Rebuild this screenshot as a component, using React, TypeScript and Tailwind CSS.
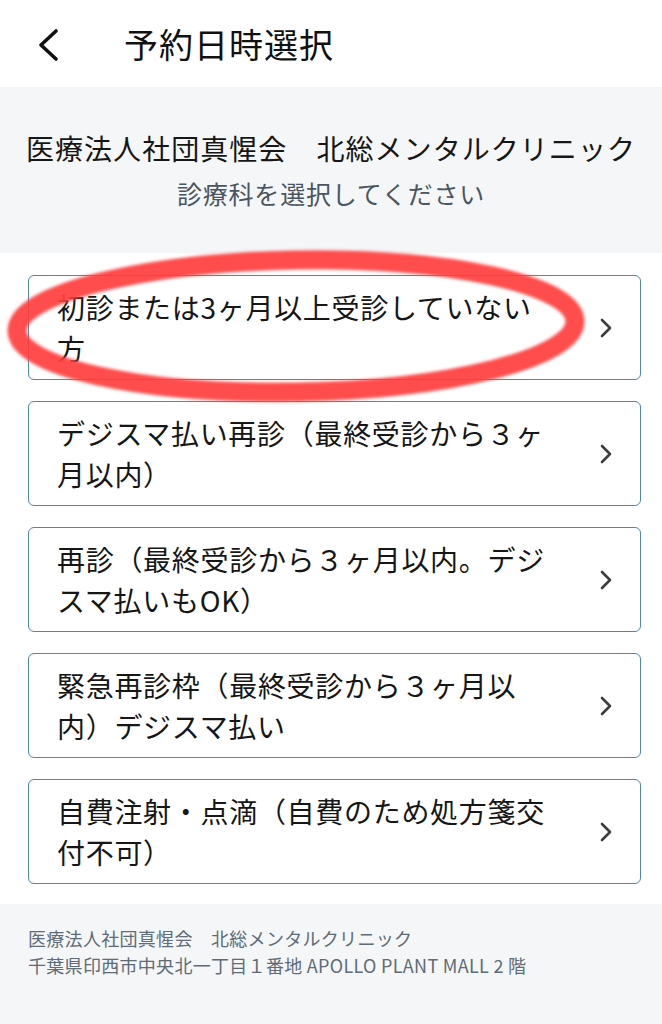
import React from "react";

const items = [
  "初診または3ヶ月以上受診していない方",
  "デジスマ払い再診（最終受診から３ヶ月以内）",
  "再診（最終受診から３ヶ月以内。デジスマ払いもOK）",
  "緊急再診枠（最終受診から３ヶ月以内）デジスマ払い",
  "自費注射・点滴（自費のため処方箋交付不可）",
];

const font = { fontFamily: '"Noto Sans CJK JP", "Noto Sans", sans-serif' };

export default function App() {
  return (
    <div className="relative w-[662px] min-h-[1024px] bg-[#f4f6f8] text-[#1a1a1a]" style={font}>
      <header className="h-[87px] bg-white flex items-center">
        <svg width="24" height="34" viewBox="0 0 24 34" className="ml-[36px] mt-[2px]">
          <path d="M20 3 L5 17 L20 31" fill="none" stroke="#111" strokeWidth="3.6" strokeLinecap="round" strokeLinejoin="round" />
        </svg>
        <h1 className="ml-[64px] text-[34px] leading-none tracking-[1px] text-[#111] font-normal">予約日時選択</h1>
      </header>

      <section className="h-[166px] bg-[#f4f6f8] flex flex-col items-center pt-[41px]">
        <div className="text-[28px] leading-[40px] tracking-[1.05px] text-[#161616] whitespace-nowrap">医療法人社団真惺会　北総メンタルクリニック</div>
        <div className="mt-[8px] text-[25px] leading-[34px] tracking-[0.8px] text-[#4b5560]">診療科を選択してください</div>
      </section>

      <section className="bg-white pt-[22px] pb-[20px] pl-[28px] pr-[21px] flex flex-col gap-[21px]">
        {items.map((t) => (
          <div key={t} className="h-[105px] border-[1.5px] border-[#4b88b6] rounded-[6px] flex items-center pl-[28px] pr-[28px]">
            <div className="w-[500px] text-[28px] leading-[41px] tracking-[0.7px] text-[#161616]" style={{ lineBreak: "strict" }}>{t}</div>
            <div className="flex-1 flex justify-end">
              <svg width="12" height="20" viewBox="0 0 12 20">
                <path d="M2 2 L10 10 L2 18" fill="none" stroke="#3d3d3d" strokeWidth="2.6" strokeLinecap="round" strokeLinejoin="round" />
              </svg>
            </div>
          </div>
        ))}
      </section>

      <footer className="bg-[#f4f6f8] px-[28px] pt-[21px] pb-[40px] text-[18px] leading-[27px] text-[#5f6b76] tracking-[0.3px]">
        <div>医療法人社団真惺会　北総メンタルクリニック</div>
        <div>千葉県印西市中央北一丁目１番地 APOLLO PLANT MALL 2 階</div>
      </footer>

      <svg className="absolute left-0 top-0 pointer-events-none" width="662" height="1024" viewBox="0 0 662 1024">
        <defs>
          <filter id="blur" x="-10%" y="-30%" width="120%" height="160%">
            <feGaussianBlur stdDeviation="1.6" />
          </filter>
        </defs>
        <ellipse cx="296" cy="326" rx="279" ry="66" fill="none" stroke="#ff3d3d" strokeOpacity="0.92" strokeWidth="19" filter="url(#blur)" transform="rotate(-1 296 326)" />
      </svg>
    </div>
  );
}
